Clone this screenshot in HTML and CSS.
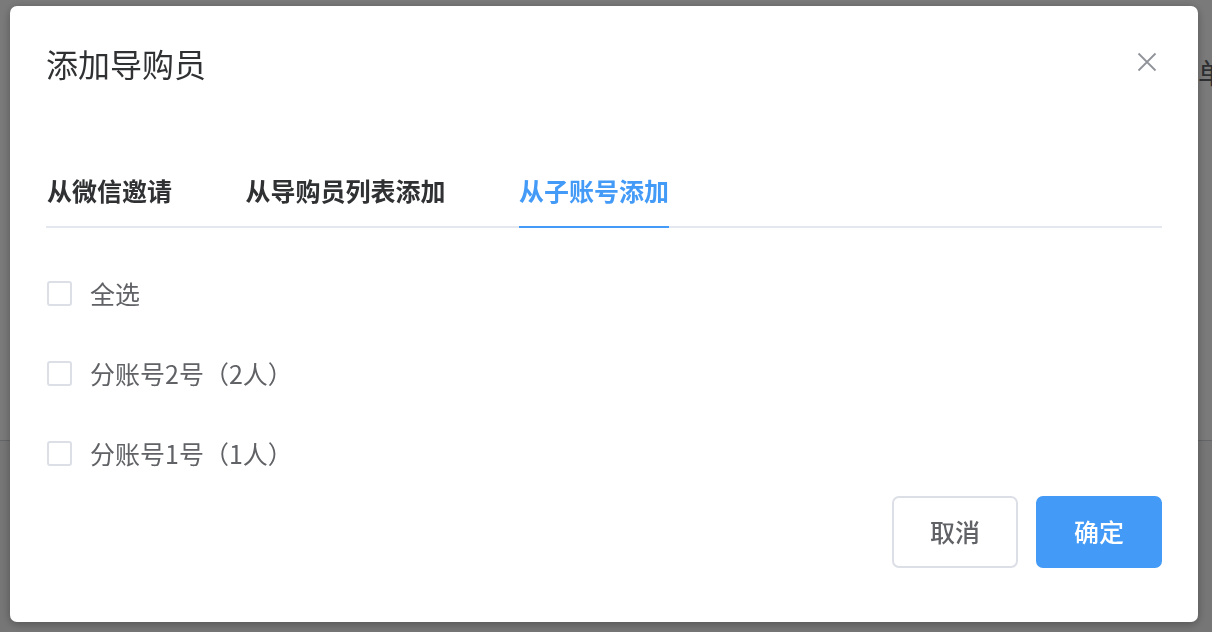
FILE: index.html
```html
<!DOCTYPE html>
<html lang="zh-CN">
<head>
<meta charset="utf-8">
<title>添加导购员</title>
<link rel="stylesheet" href="styles.css">
</head>
<body>
<div class="page">
  <div class="page-top">
    <span class="page-tail">单</span>
  </div>
  <div class="page-bottom"></div>
</div>
<div class="overlay">
  <div class="dialog">
    <div class="dlg-header">
      <span class="dlg-title">添加导购员</span>
      <button class="dlg-close" aria-label="关闭">
        <svg width="20" height="20" viewBox="0 0 20 20"><path d="M1.5 1.5 L18.5 18.5 M18.5 1.5 L1.5 18.5" stroke="#909399" stroke-width="1.8" fill="none"/></svg>
      </button>
    </div>
    <div class="dlg-body">
      <div class="tabs-nav">
        <span class="tab">从微信邀请</span>
        <span class="tab">从导购员列表添加</span>
        <span class="tab active">从子账号添加</span>
      </div>
      <div class="check-list">
        <label class="check-row"><span class="check-box"></span><span class="check-label">全选</span></label>
        <label class="check-row"><span class="check-box"></span><span class="check-label">分账号2号（2人）</span></label>
        <label class="check-row"><span class="check-box"></span><span class="check-label">分账号1号（1人）</span></label>
      </div>
    </div>
    <div class="dlg-footer">
      <button class="btn btn-default">取消</button>
      <button class="btn btn-primary">确定</button>
    </div>
  </div>
</div>
</body>
</html>
```
FILE: styles.css
```css
* { box-sizing: border-box; }
html, body { margin: 0; padding: 0; }
body {
  width: 1212px;
  height: 632px;
  overflow: hidden;
  font-family: "Noto Sans CJK SC", "Noto Sans", sans-serif;
  background: #fff;
}
.page { width: 1212px; height: 632px; display: flex; flex-direction: column; }
.page-top {
  height: 441px;
  border-bottom: 1px solid #d0d3d9;
  background: #fff;
  display: flex;
  justify-content: flex-end;
  padding-top: 52px;
}
.page-tail {
  font-size: 28px;
  line-height: 40px;
  height: 40px;
  color: #606266;
  margin-right: -14px;
}
.page-bottom { flex: 1; background: #f6f6f6; }

.overlay {
  position: fixed;
  inset: 0;
  background: rgba(0, 0, 0, 0.52);
}
.dialog {
  position: absolute;
  left: 10px;
  top: 6px;
  width: 1188px;
  height: 616px;
  background: #fff;
  border-radius: 7px;
  box-shadow: 0 2px 10px rgba(0, 0, 0, 0.3);
  display: flex;
  flex-direction: column;
}
.dlg-header {
  position: relative;
  padding: 36px 36px 18px;
}
.dlg-title {
  display: block;
  font-size: 32px;
  line-height: 43px;
  color: #303133;
}
.dlg-close {
  position: absolute;
  right: 41px;
  top: 46px;
  width: 20px;
  height: 20px;
  padding: 0;
  border: 0;
  background: none;
  display: flex;
}
.dlg-body {
  padding: 51px 36px 0;
  flex: 1;
}
.tabs-nav {
  display: flex;
  height: 74px;
  border-bottom: 2px solid #e4e7ed;
}
.tab {
  font-size: 25px;
  line-height: 72px;
  height: 74px;
  font-weight: 600;
  color: #303133;
  margin-right: 73.5px;
  border-bottom: 2px solid transparent;
}
.tab:first-child { margin-left: 1px; }
.tab:last-child { margin-right: 0; }
.tab.active {
  color: #449bf7;
  border-bottom-color: #449bf7;
}
.check-list {
  display: flex;
  flex-direction: column;
  gap: 36px;
  margin-top: 43px;
}
.check-row {
  display: flex;
  align-items: center;
  height: 44px;
  gap: 18px;
}
.check-box {
  width: 25px;
  height: 25px;
  border: 2px solid #dcdfe6;
  border-radius: 3px;
  background: #fff;
  margin-left: 1px;
}
.check-label {
  font-size: 25px;
  color: #606266;
}
.dlg-footer {
  display: flex;
  justify-content: flex-end;
  gap: 18px;
  padding: 0 36px 54px;
}
.btn {
  width: 126px;
  height: 72px;
  border-radius: 7px;
  font-family: inherit;
  font-size: 25px;
  font-weight: 500;
  padding: 0 0 2px;
}
.btn-default {
  background: #fff;
  border: 2px solid #dcdfe6;
  color: #606266;
}
.btn-primary {
  background: #449bf7;
  border: 2px solid #449bf7;
  color: #fff;
}
```
